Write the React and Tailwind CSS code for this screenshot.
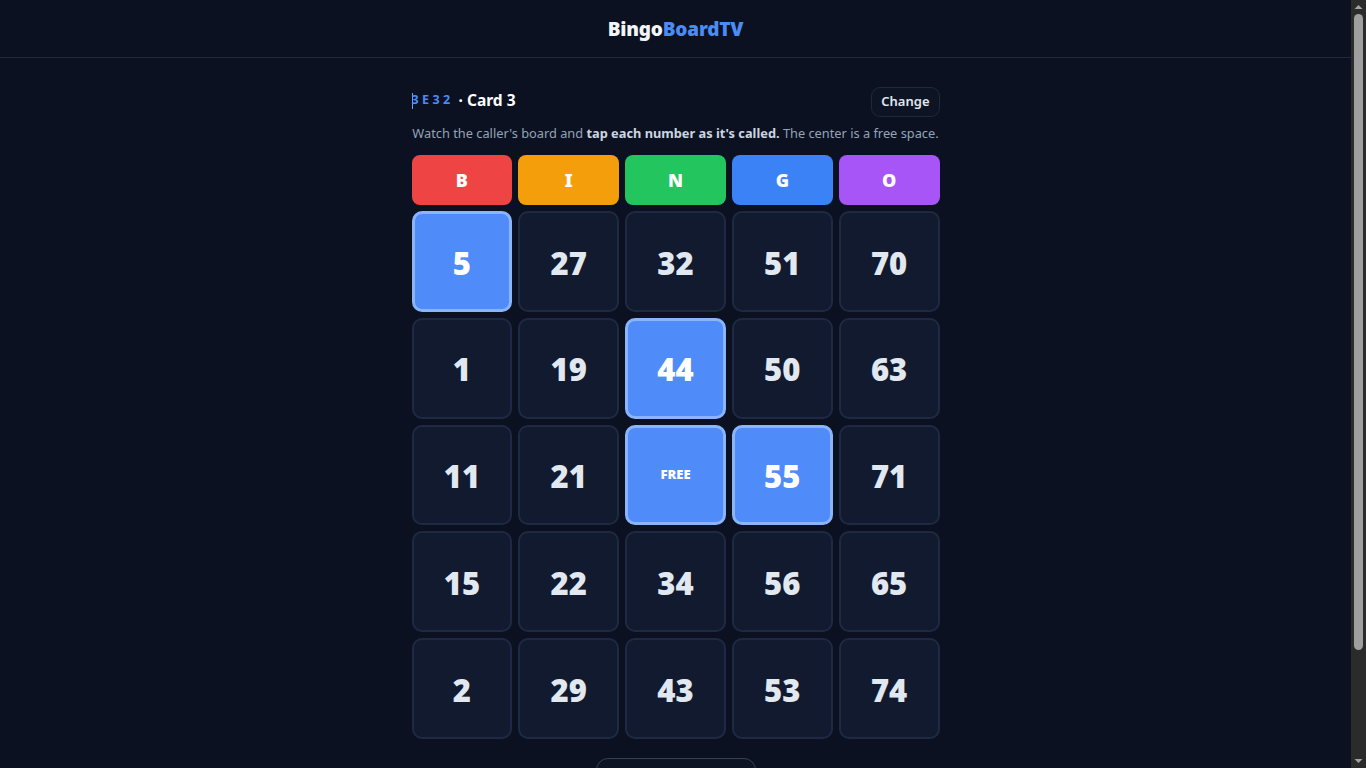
import React, { useState } from "react";

const LETTERS = [
  { l: "B", c: "bg-[#ef4444]" },
  { l: "I", c: "bg-[#f59e0b]" },
  { l: "N", c: "bg-[#22c55e]" },
  { l: "G", c: "bg-[#3b82f6]" },
  { l: "O", c: "bg-[#a855f7]" },
];

const ROWS = [
  [5, 27, 32, 51, 70],
  [1, 19, 44, 50, 63],
  [11, 21, "FREE", 55, 71],
  [15, 22, 34, 56, 65],
  [2, 29, 43, 53, 74],
];

const INITIAL = new Set(["0-0", "1-2", "2-2", "2-3"]);

function ScrollBar() {
  return (
    <div className="w-[15px] shrink-0 h-full bg-[#2b2b2b] flex flex-col items-center">
      <svg width="15" height="14" viewBox="0 0 15 14" className="shrink-0">
        <path d="M3.5 9 L7.5 5 L11.5 9 Z" fill="#a3a3a3" />
      </svg>
      <div className="w-[9px] h-[636px] rounded-[5px] bg-[#9f9f9f]" />
      <div className="flex-1" />
      <svg width="15" height="14" viewBox="0 0 15 14" className="shrink-0">
        <path d="M3.5 5 L7.5 9 L11.5 5 Z" fill="#a3a3a3" />
      </svg>
    </div>
  );
}

export default function App() {
  const [marked, setMarked] = useState(INITIAL);

  const toggle = (key) => {
    if (key === "2-2") return;
    setMarked((prev) => {
      const next = new Set(prev);
      if (next.has(key)) next.delete(key);
      else next.add(key);
      return next;
    });
  };

  return (
    <div className="h-screen flex overflow-hidden bg-[#0b1120] font-['Noto_Sans','Open_Sans',sans-serif]">
      <div className="flex-1 min-w-0 h-full overflow-hidden">
        <div className="min-h-[907px] text-[#e2e8f0]">
          <header className="h-[58px] border-b border-[#1e293b] flex items-center justify-center">
            <h1 className="text-[19px] font-black tracking-[-0.2px] mt-[2px]">
              <span className="text-[#f1f5f9]">Bingo</span>
              <span className="text-[#4b8bf5]">BoardTV</span>
            </h1>
          </header>

          <main className="w-[528px] mx-auto pt-[29px] pb-[100px]">
            <div className="flex items-center justify-between">
              <div className="flex items-center font-bold -mt-[3px]">
                <span className="border-l border-[#60a5fa] h-[16px] -mr-px" />
                <span className="text-[#4b8bf5] text-[12.5px] tracking-[3.4px] font-bold">3E32</span>
                <span className="text-white text-[15.5px] ml-[5px]">· Card 3</span>
              </div>
              <button className="h-[30px] px-[9px] rounded-[9px] border border-[#1e293b] bg-[#0d1424] text-[13px] font-semibold text-[#e2e8f0]">
                Change
              </button>
            </div>

            <p className="mt-[7px] text-[12.8px] leading-[18px] text-[#94a3b8] text-center whitespace-nowrap">
              Watch the caller's board and{" "}
              <b className="font-bold text-[#cbd5e1]">tap each number as it's called.</b>{" "}
              The center is a free space.
            </p>

            <div className="mt-[13px] grid grid-cols-5 gap-[6px]">
              {LETTERS.map((h) => (
                <div
                  key={h.l}
                  className={`${h.c} h-[50px] rounded-[8px] flex items-center justify-center text-white text-[18px] font-black`}
                >
                  {h.l}
                </div>
              ))}
            </div>

            <div className="mt-[6px] grid grid-cols-5 gap-[6px]">
              {ROWS.map((row, r) =>
                row.map((n, c) => {
                  const key = `${r}-${c}`;
                  const on = marked.has(key);
                  const free = n === "FREE";
                  return (
                    <button
                      key={key}
                      onClick={() => toggle(key)}
                      className={
                        on
                          ? "aspect-square rounded-[10px] border-[3px] border-[#8ab4fb] bg-[#4f8cf9] flex items-center justify-center text-white"
                          : "aspect-square rounded-[10px] border-2 border-[#1e2a44] bg-[#111a2f] flex items-center justify-center text-[#e2e8f0]"
                      }
                    >
                      <span className={free ? "text-[13px] font-black" : "text-[31px] font-black pt-[3px]"}>{n}</span>
                    </button>
                  );
                })
              )}
            </div>

            <div className="mt-[19px] flex justify-center">
              <button className="w-[160px] h-[42px] rounded-[12px] border border-[#334155] bg-[#0d1424] text-[13px] font-semibold text-[#e2e8f0]">
                Clear marks
              </button>
            </div>
          </main>
        </div>
      </div>
      <ScrollBar />
    </div>
  );
}
